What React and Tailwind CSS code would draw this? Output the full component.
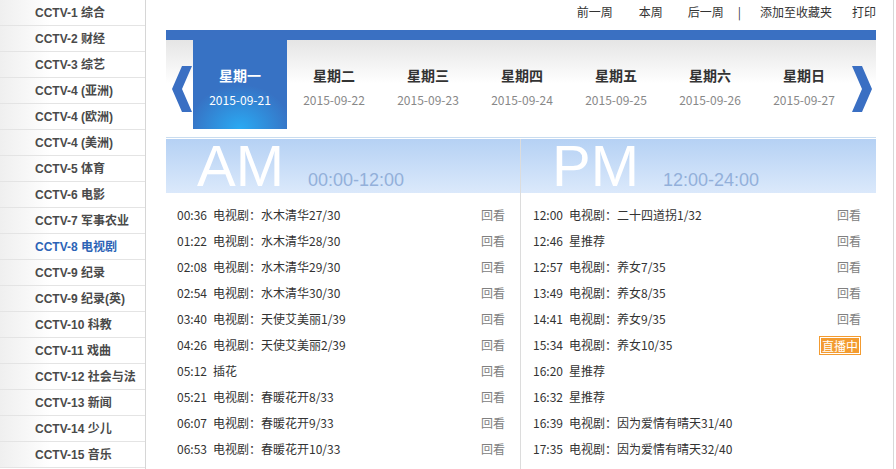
import React from 'react';

const channels = [
  'CCTV-1 综合',
  'CCTV-2 财经',
  'CCTV-3 综艺',
  'CCTV-4 (亚洲)',
  'CCTV-4 (欧洲)',
  'CCTV-4 (美洲)',
  'CCTV-5 体育',
  'CCTV-6 电影',
  'CCTV-7 军事农业',
  'CCTV-8 电视剧',
  'CCTV-9 纪录',
  'CCTV-9 纪录(英)',
  'CCTV-10 科教',
  'CCTV-11 戏曲',
  'CCTV-12 社会与法',
  'CCTV-13 新闻',
  'CCTV-14 少儿',
  'CCTV-15 音乐',
];

const days = [
  ['星期一', '2015-09-21'],
  ['星期二', '2015-09-22'],
  ['星期三', '2015-09-23'],
  ['星期四', '2015-09-24'],
  ['星期五', '2015-09-25'],
  ['星期六', '2015-09-26'],
  ['星期日', '2015-09-27'],
];

// [时间, 节目, 状态] 状态: back = 回看, live = 直播中
const amList = [
  ['00:36', '电视剧：水木清华27/30', 'back'],
  ['01:22', '电视剧：水木清华28/30', 'back'],
  ['02:08', '电视剧：水木清华29/30', 'back'],
  ['02:54', '电视剧：水木清华30/30', 'back'],
  ['03:40', '电视剧：天使艾美丽1/39', 'back'],
  ['04:26', '电视剧：天使艾美丽2/39', 'back'],
  ['05:12', '插花', 'back'],
  ['05:21', '电视剧：春暖花开8/33', 'back'],
  ['06:07', '电视剧：春暖花开9/33', 'back'],
  ['06:53', '电视剧：春暖花开10/33', 'back'],
];

const pmList = [
  ['12:00', '电视剧：二十四道拐1/32', 'back'],
  ['12:46', '星推荐', 'back'],
  ['12:57', '电视剧：养女7/35', 'back'],
  ['13:49', '电视剧：养女8/35', 'back'],
  ['14:41', '电视剧：养女9/35', 'back'],
  ['15:34', '电视剧：养女10/35', 'live'],
  ['16:20', '星推荐', ''],
  ['16:32', '星推荐', ''],
  ['16:39', '电视剧：因为爱情有晴天31/40', ''],
  ['17:35', '电视剧：因为爱情有晴天32/40', ''],
];

function Chevron({ dir }) {
  const points = dir === 'left' ? '10,0 20,0 10,23 20,46 10,46 0,23' : '0,0 10,0 20,23 10,46 0,46 10,23';
  return (
    <svg width="20" height="46" viewBox="0 0 20 46">
      <polygon points={points} fill="#3a6fc3" />
    </svg>
  );
}

function Banner({ big, range }) {
  return (
    <div className="h-[54px] flex items-baseline pl-[31px] bg-linear-to-b from-[#b5d1f4] to-[#dbe9fb] font-['Liberation_Sans',sans-serif]">
      <span className="text-[58px] leading-[54px] text-white">{big}</span>
      <span className="ml-[24px] text-[18px] leading-none text-[#93b0da]">{range}</span>
    </div>
  );
}

function Schedule({ rows, padLeft }) {
  return (
    <div className={`pt-[9px] pr-[15px] ${padLeft}`}>
      {rows.map(([time, title, state]) => (
        <div key={time} className="h-[26px] flex items-center">
          <span className="text-[#333]">{time}</span>
          <span className="ml-[6px] flex-1 text-[#333]">{title}</span>
          {state === 'back' && <span className="text-[#808080]">回看</span>}
          {state === 'live' && (
            <span className="bg-[#f39b30] p-px">
              <span className="block border border-white px-px leading-[15px] text-white">直播中</span>
            </span>
          )}
        </div>
      ))}
    </div>
  );
}

export default function App() {
  return (
    <div className="flex w-[896px] h-[469px] overflow-hidden bg-white text-[12px] text-[#333] font-['Noto_Sans_CJK_SC',sans-serif]">
      <aside className="w-[146px] shrink-0 h-full border-r border-[#d6d6d6]">
        {channels.map((c) => (
          <div
            key={c}
            className={`h-[26px] flex items-center pl-[35px] pt-px border-b border-[#e4e4e4] bg-linear-to-r from-[#efefef] to-white to-35% font-bold font-['Liberation_Sans','Noto_Sans_CJK_SC',sans-serif] ${
              c === 'CCTV-8 电视剧' ? 'text-[#2c63b6]' : 'text-[#4a4a4a]'
            }`}
          >
            {c}
          </div>
        ))}
      </aside>

      <main className="w-[710px] ml-[20px] shrink-0 flex flex-col">
        <nav className="h-[30px] pb-[6px] flex items-center justify-end text-[#333]">
          <a>前一周</a>
          <a className="ml-[26px]">本周</a>
          <a className="ml-[25px]">后一周</a>
          <span className="ml-[14px]">|</span>
          <a className="ml-[19px]">添加至收藏夹</a>
          <a className="ml-[20px]">打印</a>
        </nav>

        <div className="h-[10px] bg-[#3a70c2]" />

        <div className="h-[98px] flex border-b border-[#c9dcef] bg-[linear-gradient(#e5e5e5,#ffffff_45%)]">
          <div className="w-[27px] pl-[6px] flex items-center">
            <Chevron dir="left" />
          </div>
          {days.map(([name, date], i) => (
            <div
              key={name}
              className={`w-[94px] h-[89px] flex flex-col items-center pt-[26px] ${
                i === 0 ? 'bg-[radial-gradient(55%_50%_at_50%_100%,#2aaaf3,#3772c4)] text-white' : ''
              }`}
            >
              <span className={`text-[14px] leading-[18px] font-bold ${i === 0 ? 'text-white' : 'text-[#333]'}`}>{name}</span>
              <span className={`mt-[7px] leading-[18px] ${i === 0 ? 'text-white' : 'text-[#888]'}`}>{date}</span>
            </div>
          ))}
          <div className="w-[25px] pl-px flex items-center">
            <Chevron dir="right" />
          </div>
        </div>

        <div className="h-px" />

        <div className="flex flex-1">
          <section className="w-[355px] border-r border-[#dcdcdc]">
            <Banner big="AM" range="00:00-12:00" />
            <Schedule rows={amList} padLeft="pl-[11px]" />
          </section>
          <section className="flex-1">
            <Banner big="PM" range="12:00-24:00" />
            <Schedule rows={pmList} padLeft="pl-[12px]" />
          </section>
        </div>
      </main>

      <div className="ml-[17px] w-px h-full bg-[#d8d8d8]" />
    </div>
  );
}
